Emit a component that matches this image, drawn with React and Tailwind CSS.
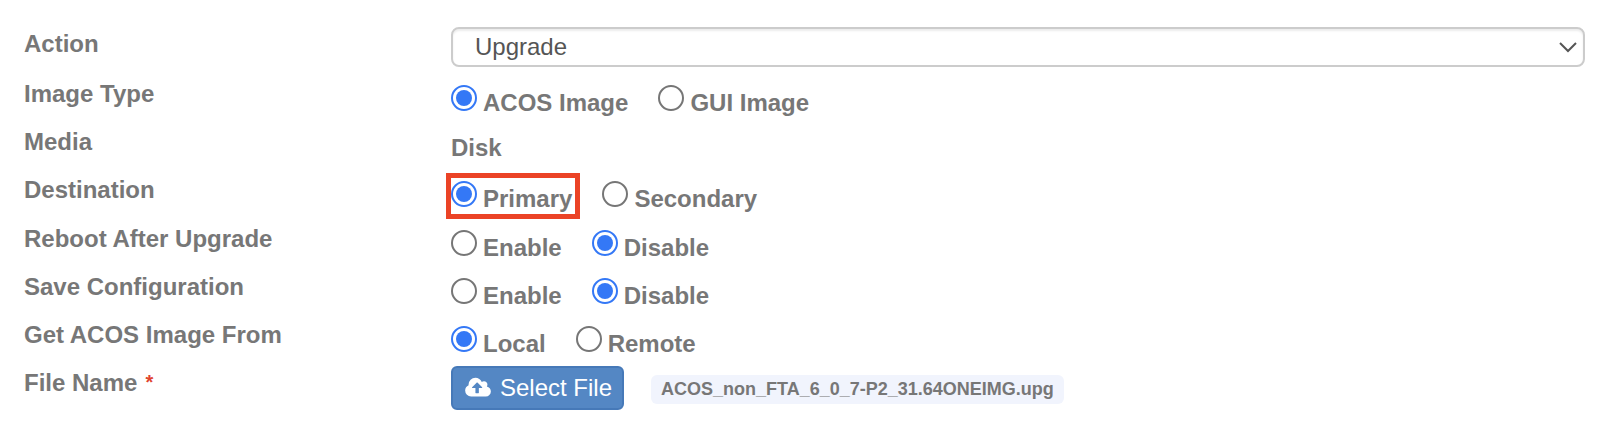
import React, { useState } from "react";

const CloudUploadIcon = () => (
  <svg viewBox="0 0 1920 1792" className="h-6 w-[26px]" fill="currentColor">
    <path d="M1280 864q0-14-9-23l-352-352q-9-9-23-9t-23 9l-351 351q-10 12-10 24 0 14 9 23t23 9h224v352q0 13 9.5 22.5t22.5 9.5h192q13 0 22.5-9.5t9.5-22.5v-352h224q13 0 22.5-9.5t9.5-22.5zm640 288q0 159-112.5 271.5t-271.5 112.5h-1088q-185 0-316.5-131.5t-131.5-316.5q0-130 70-240t188-165q-2-30-2-43 0-212 150-362t362-150q156 0 285.5 87t188.5 231q71-62 166-62 106 0 181 75t75 181q0 76-41 138 130 31 213.5 135.5t83.5 238.5z" />
  </svg>
);

const Row = ({ label, htmlFor, children }) => (
  <div className="flex min-h-12 items-start">
    <label htmlFor={htmlFor} className="w-[427px] shrink-0 leading-[34px]">
      {label}
    </label>
    <div className="min-w-0 flex-1">{children}</div>
  </div>
);

const RadioRow = ({ label, name, options, initial, highlight }) => {
  const [value, setValue] = useState(initial);

  return (
    <fieldset className="flex min-h-12 items-start">
      <legend className="float-left w-[427px] shrink-0 leading-[34px]">
        {label}
      </legend>
      <div className="flex flex-1 gap-[30px] pt-2 leading-8">
        {options.map((option) => (
          <label key={option} className="relative flex items-baseline gap-1.5">
            <input
              type="radio"
              name={name}
              value={option}
              checked={value === option}
              onChange={() => setValue(option)}
              className="size-[26px] appearance-none rounded-full border-2 border-[#767676] bg-clip-content p-[3px] checked:border-[#3478f6] checked:bg-[#3478f6]"
            />
            {option}
            {highlight === option && (
              <span className="pointer-events-none absolute -top-2 -right-2 -bottom-1 -left-[5px] border-[5px] border-[#eb4326]" />
            )}
          </label>
        ))}
      </div>
    </fieldset>
  );
};

const App = () => {
  const [action, setAction] = useState("Upgrade");

  return (
    <form className="bg-white pt-[27px] pr-[13px] pb-4 pl-6 font-['Liberation_Sans',Arial,sans-serif] text-[24px] font-bold text-[#777777]">
      <div className="mb-0.5">
        <Row label="Action" htmlFor="action">
          <div className="relative">
            <select
              id="action"
              value={action}
              onChange={(e) => setAction(e.target.value)}
              className="block h-10 w-full appearance-none rounded-lg border-2 border-[#cccccc] bg-white pl-[22px] text-[24px] font-normal text-[#555555] shadow-[inset_0_2px_2px_rgba(0,0,0,0.075)]"
            >
              <option>Upgrade</option>
            </select>
            <svg
              viewBox="0 0 18 12"
              className="pointer-events-none absolute top-3.5 right-2 h-3 w-[18px]"
              fill="none"
              stroke="#555555"
              strokeWidth="2"
            >
              <path d="M1 2 L9 10 L17 2" />
            </svg>
          </div>
        </Row>
      </div>

      <RadioRow
        label="Image Type"
        name="imageType"
        options={["ACOS Image", "GUI Image"]}
        initial="ACOS Image"
      />
      <Row label="Media">
        <p className="pt-1.5 leading-[34px]">Disk</p>
      </Row>
      <div className="mb-px">
        <RadioRow
          label="Destination"
          name="destination"
          options={["Primary", "Secondary"]}
          initial="Primary"
          highlight="Primary"
        />
      </div>
      <RadioRow
        label="Reboot After Upgrade"
        name="reboot"
        options={["Enable", "Disable"]}
        initial="Disable"
      />
      <RadioRow
        label="Save Configuration"
        name="saveConfig"
        options={["Enable", "Disable"]}
        initial="Disable"
      />
      <RadioRow
        label="Get ACOS Image From"
        name="imageFrom"
        options={["Local", "Remote"]}
        initial="Local"
      />

      <Row
        htmlFor="selectFile"
        label={
          <span className="flex gap-2">
            File Name
            <span className="text-[20px] leading-8 text-[#e0442f]">*</span>
          </span>
        }
      >
        <div className="flex items-center gap-[27px]">
          <button
            id="selectFile"
            type="button"
            className="flex h-11 items-center gap-[9px] rounded-md border-2 border-[#4679b8] bg-[#5487c4] pr-2.5 pl-3 font-normal text-white"
          >
            <CloudUploadIcon />
            Select File
          </button>
          <span className="mt-0.5 rounded-md bg-[#f1f4fd] px-2.5 text-[18px] leading-[29px]">
            ACOS_non_FTA_6_0_7-P2_31.64ONEIMG.upg
          </span>
        </div>
      </Row>
    </form>
  );
};

export default App;
